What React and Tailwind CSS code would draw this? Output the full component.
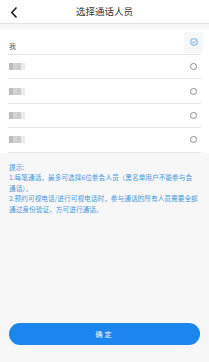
import React from "react";

const font = { fontFamily: '"Noto Sans CJK SC", "Noto Sans", sans-serif' };

function Blur() {
  return (
    <div className="flex h-[7px] w-[16px] blur-[0.6px]">
      <div className="h-full w-[4px] bg-[#bdbdbd]" />
      <div className="h-full w-[4px] bg-[#d2d2d2]" />
      <div className="h-full w-[4px] bg-[#cccccc]" />
      <div className="h-full w-[4px] bg-[#ebebeb]" />
    </div>
  );
}

function Radio() {
  return <div className="h-[7px] w-[7px] rounded-full border border-[#8a8a8a]" />;
}

function Checked() {
  return (
    <div className="flex h-[21px] w-[19px] items-center justify-center bg-[#f6f7f9]">
      <svg width="8" height="8" viewBox="0 0 16 16">
        <circle cx="8" cy="8" r="6.8" fill="none" stroke="#4b9be3" strokeWidth="1.6" />
        <path d="M4.8 8.2 L7.2 10.4 L11.2 5.8" fill="none" stroke="#4b9be3" strokeWidth="1.6" strokeLinecap="round" strokeLinejoin="round" />
      </svg>
    </div>
  );
}

function Row({ first, children, checked }) {
  return (
    <div className={`${first ? "h-[25px]" : "h-[24.4px]"} bg-white px-[8px]`}>
      <div className="flex h-full items-center justify-between border-b border-[#e6e6e6] pl-[1px]">
        <div>{children}</div>
        <div className="flex w-[19px] items-center justify-center mr-[-2px]">
          {checked ? <Checked /> : <Radio />}
        </div>
      </div>
    </div>
  );
}

export default function App() {
  return (
    <div className="flex h-[362px] w-full flex-col bg-[#f7f7f7]" style={font}>
      <div className="relative flex h-[24px] items-center justify-center border-b border-[#e3e3e3] bg-white">
        <svg className="absolute left-[10px] top-[7px]" width="8" height="11" viewBox="0 0 8 11">
          <path d="M6 1 L1.8 5.5 L6 10" fill="none" stroke="#222" strokeWidth="1.7" strokeLinecap="round" strokeLinejoin="round" />
        </svg>
        <span className="text-[9.5px] leading-none text-[#333]">选择通话人员</span>
      </div>
      <div className="mt-[6px] bg-white">
        <Row first checked>
          <span className="text-[7px] leading-none text-[#555]">我</span>
        </Row>
        <Row><Blur /></Row>
        <Row><Blur /></Row>
        <Row><Blur /></Row>
        <Row><Blur /></Row>
      </div>
      <div className="px-[9px] pt-[9px] text-[6.7px] leading-[10.5px] text-[#4a97dc]">
        <div>提示:</div>
        <div>
          1.每笔通话，最多可选择6位参会人员（黑名单用户不能参与会
          <br />
          通话）。
        </div>
        <div>2.预约可视电话/进行可视电话时，参与通话的所有人员需要全部通过身份验证，方可进行通话。</div>
      </div>
      <div className="mt-auto mb-[17px] px-[9px]">
        <div className="flex h-[22px] items-center justify-center rounded-full bg-[#1a86ee] text-[7px] tracking-[2px] text-white">
          确定
        </div>
      </div>
    </div>
  );
}
